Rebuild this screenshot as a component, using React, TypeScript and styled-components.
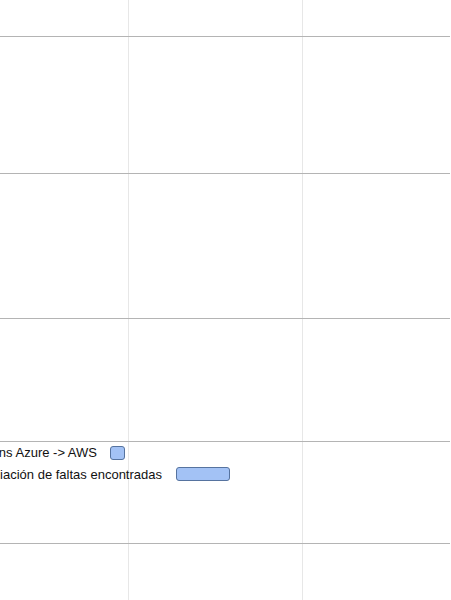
import React from "react";
import styled, { createGlobalStyle } from "styled-components";

const Global = createGlobalStyle`
  html, body {
    margin: 0;
    padding: 0;
    background: #ffffff;
    overflow: hidden;
  }
  body {
    font-family: "Liberation Sans", Arial, sans-serif;
  }
`;

const Chart = styled.div`
  width: 451px;
  height: 600px;
  overflow: hidden;
  background-color: #ffffff;
  background-image:
    linear-gradient(to right, transparent 128px, #e7e7e7 128px, #e7e7e7 129px, transparent 129px),
    linear-gradient(to right, transparent 302px, #e7e7e7 302px, #e7e7e7 303px, transparent 303px);
`;

const Section = styled.div<{ $h: number; $pad?: number }>`
  width: 450px;
  height: ${(p) => p.$h}px;
  border-bottom: 1px solid #b4b4b4;
  display: flex;
  flex-direction: column;
  gap: 7px;
  padding-top: ${(p) => p.$pad ?? 0}px;
  box-sizing: content-box;
`;

const TaskRow = styled.div`
  display: flex;
  align-items: flex-start;
  height: 14px;
`;

const Label = styled.div<{ $w: number; $dy: number }>`
  flex: 0 0 ${(p) => p.$w}px;
  min-width: 0;
  display: flex;
  justify-content: flex-end;
  white-space: nowrap;
  font-size: 13px;
  line-height: 14px;
  color: #111111;
  margin-top: ${(p) => p.$dy}px;
`;

const Bar = styled.div<{ $w: number; $gap: number }>`
  flex: 0 0 auto;
  margin-left: ${(p) => p.$gap}px;
  width: ${(p) => p.$w}px;
  height: 14px;
  box-sizing: border-box;
  background: #a3c2f5;
  border: 1px solid #56739f;
  border-radius: 3px;
`;

type Task = { label: string; textEnd: number; start: number; width: number; dy: number };

const tasks: Task[] = [
  { label: "Migración de Functions Azure -> AWS", textEnd: 97, start: 110, width: 15, dy: 0 },
  { label: "Remediación de faltas encontradas", textEnd: 162, start: 176, width: 54, dy: 1 },
];

export default function App() {
  return (
    <>
      <Global />
      <Chart>
        <Section $h={36} />
        <Section $h={136} />
        <Section $h={144} />
        <Section $h={122} />
        <Section $h={97} $pad={4}>
          {tasks.map((t) => (
            <TaskRow key={t.label}>
              <Label $w={t.textEnd} $dy={t.dy}>
                {t.label}
              </Label>
              <Bar $gap={t.start - t.textEnd} $w={t.width} />
            </TaskRow>
          ))}
        </Section>
      </Chart>
    </>
  );
}
